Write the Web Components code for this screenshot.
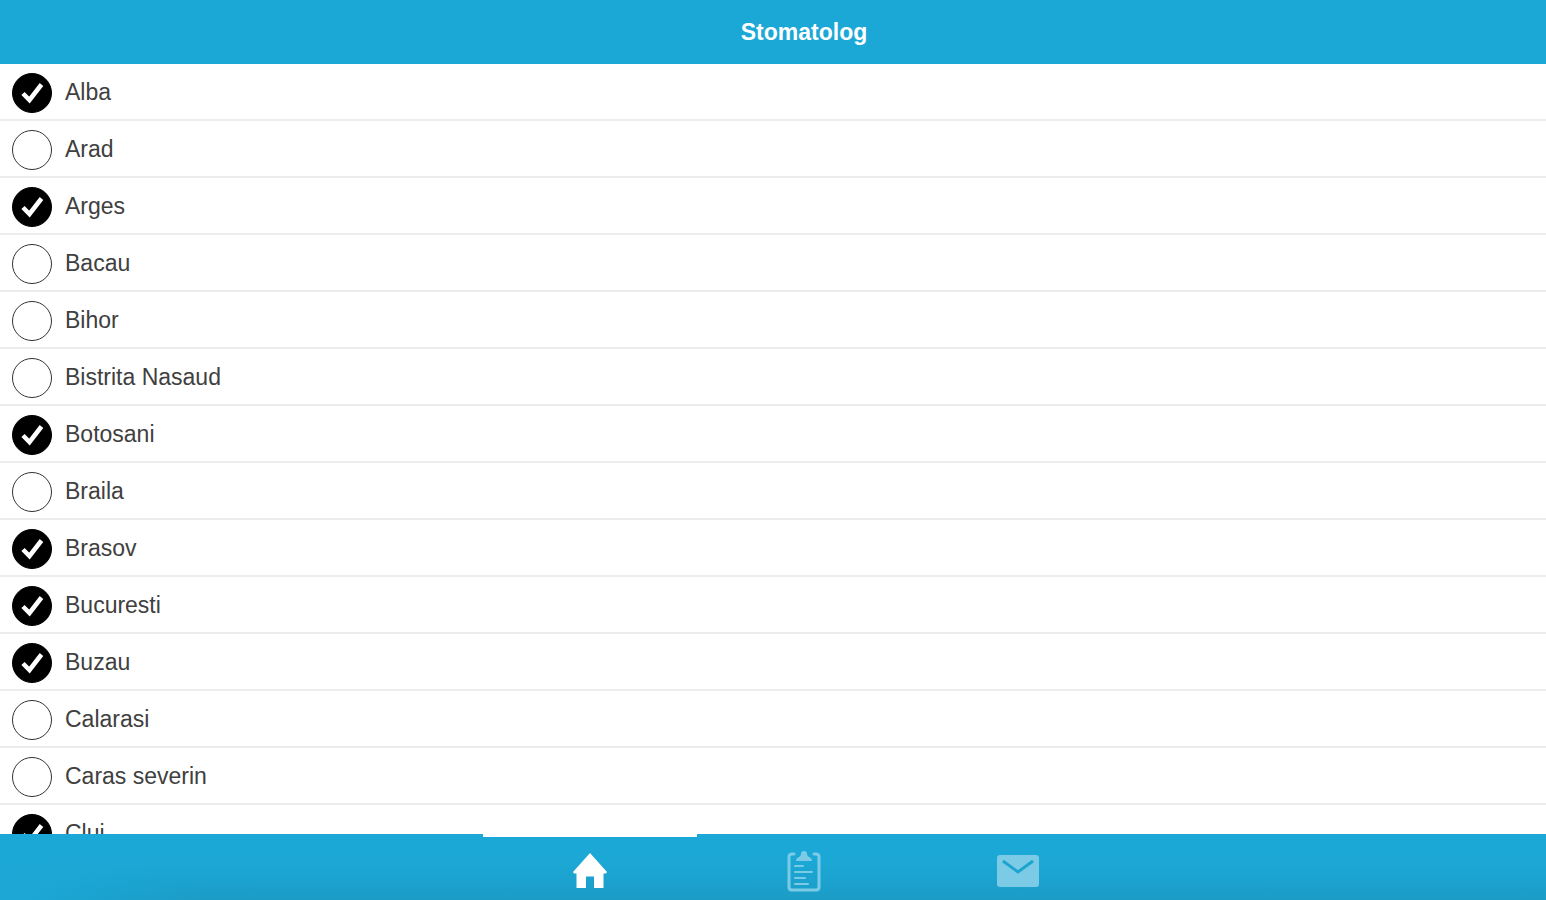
<!DOCTYPE html>
<html lang="ro">
<head>
<meta charset="utf-8">
<meta name="viewport" content="width=device-width, initial-scale=1">
<title>Stomatolog</title>
<style>
  html, body { margin: 0; height: 100%; }
  body { font-family: "Liberation Sans", Arial, sans-serif; background: #fff; }
</style>
</head>
<body>
<county-app></county-app>

<template id="app-tpl">
  <style>
    :host { display: flex; flex-direction: column; height: 100vh; overflow: hidden; --bar: #1ca8d6; --inset: 62px; }
  </style>
  <app-header>Stomatolog</app-header>
  <county-list>
    <county-row checked>Alba</county-row>
    <county-row>Arad</county-row>
    <county-row checked>Arges</county-row>
    <county-row>Bacau</county-row>
    <county-row>Bihor</county-row>
    <county-row>Bistrita Nasaud</county-row>
    <county-row checked>Botosani</county-row>
    <county-row>Braila</county-row>
    <county-row checked>Brasov</county-row>
    <county-row checked>Bucuresti</county-row>
    <county-row checked>Buzau</county-row>
    <county-row>Calarasi</county-row>
    <county-row>Caras severin</county-row>
    <county-row checked>Cluj</county-row>
  </county-list>
  <tab-bar>
    <tab-button label="Acasa" active>
      <svg width="36" height="38" viewBox="0 0 36 38" fill="#fff"><path d="M18 1 35 20 34 21.500H31.500V36H22V24.500H14V36H4.500V21.500H2L1 20Z"/></svg>
    </tab-button>
    <tab-button label="Programari">
      <svg width="34" height="42" viewBox="0 0 34 42" fill="none" stroke="#7ccbe6" stroke-linecap="round"><path stroke-width="3" d="M7 4H5Q2 4 2 7V37Q2 40 5 40H29Q32 40 32 37V7Q32 4 29 4H27"/><path fill="#7ccbe6" stroke="none" d="M9 11Q9 8 12 7Q14 6 14 4Q14 1 17 1T20 4Q20 6 22 7Q25 8 25 11Z"/><path stroke-width="2" d="M8 16H16M8 22H25M8 28H18M8 34H21"/></svg>
    </tab-button>
    <tab-button label="Mesaje">
      <svg width="42" height="32" viewBox="0 0 42 32"><rect width="42" height="32" rx="3" fill="#7ccbe6"/><path d="M6 6 21 17 36 6" fill="none" stroke="#1ca4d0" stroke-width="3"/></svg>
    </tab-button>
  </tab-bar>
</template>

<template id="header-tpl">
  <style>
    :host { display: block; flex: none; background: var(--bar); }
    h1 { margin: 0; padding-left: var(--inset); font-size: 23px; line-height: 64px; font-weight: 700; color: #fff; text-align: center; }
  </style>
  <h1><slot></slot></h1>
</template>

<template id="list-tpl">
  <style>
    :host { display: block; flex: 1; min-height: 0; overflow-y: auto; scrollbar-width: none; }
  </style>
  <slot></slot>
</template>

<template id="row-tpl">
  <style>
    :host { display: block; border-bottom: 2px solid #ececec; }
    label { display: flex; align-items: center; gap: 13px; box-sizing: border-box; height: 55px; padding: 2px 12px 0; font-size: 23px; color: #404040; cursor: pointer; }
    .tick { display: grid; }
    .tick > * { grid-area: 1 / 1; }
    input { appearance: none; box-sizing: border-box; width: 40px; height: 40px; margin: 0; border: 1px solid #333; border-radius: 50%; background: #fff; }
    input:checked { background: #000; border-color: #000; }
    svg { visibility: hidden; pointer-events: none; }
    input:checked + svg { visibility: visible; }
  </style>
  <label>
    <span class="tick">
      <input type="checkbox">
      <svg width="40" height="40" viewBox="0 0 40 40" aria-hidden="true"><path d="M11 20.500 17.500 27 29.500 11.500" fill="none" stroke="#fff" stroke-width="4.500"/></svg>
    </span>
    <slot></slot>
  </label>
</template>

<template id="bar-tpl">
  <style>
    :host { display: block; flex: none; background: linear-gradient(90deg, #1ca8d6, transparent 200px), linear-gradient(#1ca8d6 40%, #1b9cc6); }
    nav { display: flex; justify-content: center; height: 66px; padding-left: var(--inset); }
  </style>
  <nav><slot></slot></nav>
</template>

<template id="tab-tpl">
  <style>
    :host { display: block; width: 214px; }
    button { display: flex; align-items: center; justify-content: center; box-sizing: border-box; width: 100%; height: 100%; margin: 0; padding: 4px 0 0; border: 0; border-top: 3px solid transparent; background: none; cursor: pointer; }
    :host([active]) button { border-top-color: #fff; }
  </style>
  <button type="button"><slot></slot></button>
</template>

<script>
  class TemplateElement extends HTMLElement {
    constructor() {
      super();
      const tpl = document.getElementById(this.constructor.template);
      this.attachShadow({ mode: "open" }).append(tpl.content.cloneNode(true));
    }
  }
  class AppHeader extends TemplateElement { static template = "header-tpl"; }
  class CountyList extends TemplateElement { static template = "list-tpl"; }
  class CountyRow extends TemplateElement {
    static template = "row-tpl";
    connectedCallback() {
      const box = this.shadowRoot.querySelector("input");
      box.checked = this.hasAttribute("checked");
      box.setAttribute("aria-label", this.textContent);
    }
  }
  class TabBar extends TemplateElement {
    static template = "bar-tpl";
    connectedCallback() {
      this.addEventListener("click", (e) => {
        const tab = e.composedPath().find((n) => n.localName === "tab-button");
        if (!tab) return;
        for (const t of tab.parentNode.querySelectorAll("tab-button")) t.toggleAttribute("active", t === tab);
      });
    }
  }
  class TabButton extends TemplateElement {
    static template = "tab-tpl";
    connectedCallback() {
      this.shadowRoot.querySelector("button").setAttribute("aria-label", this.getAttribute("label"));
    }
  }
  class CountyApp extends TemplateElement { static template = "app-tpl"; }

  customElements.define("app-header", AppHeader);
  customElements.define("county-list", CountyList);
  customElements.define("county-row", CountyRow);
  customElements.define("tab-bar", TabBar);
  customElements.define("tab-button", TabButton);
  customElements.define("county-app", CountyApp);
</script>
</body>
</html>
